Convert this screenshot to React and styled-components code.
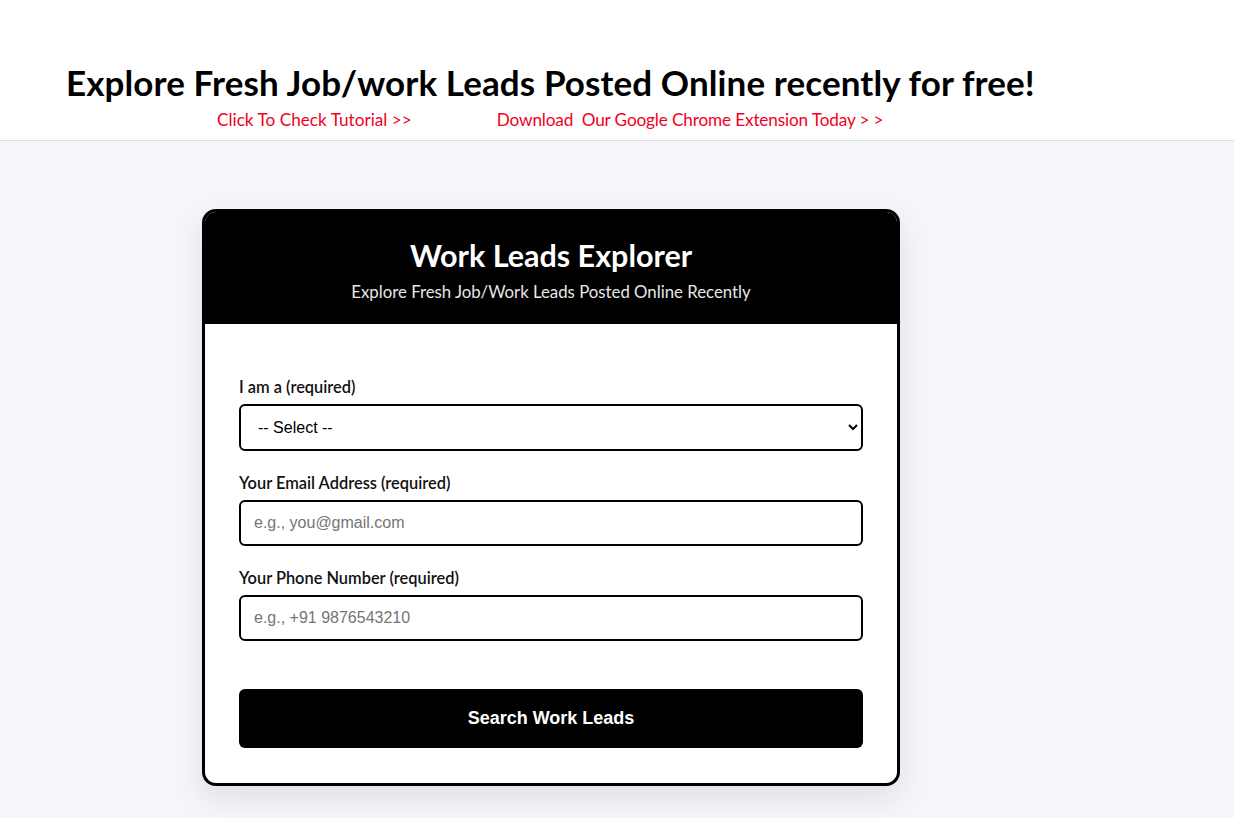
import React from "react";
import styled, { createGlobalStyle } from "styled-components";

const Global = createGlobalStyle`
  html, body { margin: 0; padding: 0; }
  body { background: #f5f6fa; font-family: "Lato", "Noto Sans", sans-serif; }
  * { box-sizing: border-box; }
`;

const Header = styled.header`
  background: #ffffff;
  border-bottom: 1px solid #dedfe3;
  height: 141px;
  padding: 62px 0 0 66px;
`;

const SiteTitle = styled.h1`
  margin: 0;
  font-family: "Lato", sans-serif;
  font-weight: 700;
  font-size: 35px;
  line-height: 40px;
  color: #000;
  letter-spacing: 0.1px;
`;

const LinkRow = styled.div`
  display: flex;
  padding-left: 151px;
  gap: 85px;
  margin-top: 7px;
`;

const RedLink = styled.a`
  font-family: "Lato", sans-serif;
  font-size: 17.2px;
  line-height: 22px;
  color: #f2001e;
  text-decoration: none;
  white-space: pre;
  letter-spacing: ${(p) => p.$tight ? "-0.15px" : "0"};
`;

const Main = styled.main`
  padding: 68px 0 40px 202px;
`;

const Card = styled.section`
  width: 698px;
  border: 3px solid #000;
  border-radius: 14px;
  background: #fff;
  overflow: hidden;
  box-shadow: 0 12px 30px rgba(20, 25, 45, 0.1);
`;

const CardHead = styled.div`
  background: #000;
  color: #fff;
  height: 112px;
  text-align: center;
  padding-top: 25px;
`;

const CardTitle = styled.h2`
  margin: 0;
  font-size: 30.5px;
  line-height: 36px;
  font-weight: 700;
`;

const CardSub = styled.p`
  margin: 0;
  margin-top: 8px;
  font-size: 16.8px;
  line-height: 22px;
  color: #e6e6e6;
`;

const Body = styled.form`
  padding: 53px 34px 35px;
  display: flex;
  flex-direction: column;
`;

const Field = styled.div`
  display: flex;
  flex-direction: column;
  margin-bottom: ${(p) => p.$gap}px;
`;

const Label = styled.label`
  font-size: 16.4px;
  line-height: 20px;
  font-weight: 600;
  color: #111;
  margin-bottom: 7px;
`;

const Select = styled.select`
  height: 47px;
  border: 2px solid #000;
  border-radius: 6px;
  padding: 0 12px 0 13px;
  font-family: "Liberation Sans", Arial, sans-serif;
  font-size: 16px;
  color: #000;
  background: #fff;
`;

const Input = styled.input`
  height: 46px;
  border: 2px solid #000;
  border-radius: 6px;
  padding: 0 13px;
  font-family: "Liberation Sans", Arial, sans-serif;
  font-size: 16px;
  color: #000;
  &::placeholder { color: #757575; }
`;

const Button = styled.button`
  height: 59px;
  border: none;
  border-radius: 6px;
  background: #000;
  color: #fff;
  font-family: "Liberation Sans", Arial, sans-serif;
  font-weight: 700;
  font-size: 18px;
  cursor: pointer;
`;

export default function App() {
  return (
    <>
      <Global />
      <Header>
        <SiteTitle>Explore Fresh Job/work Leads Posted Online recently for free!</SiteTitle>
        <LinkRow>
          <RedLink href="#">Click To Check Tutorial &gt;&gt;</RedLink>
          <RedLink href="#" $tight>{"Download  Our Google Chrome Extension Today > >"}</RedLink>
        </LinkRow>
      </Header>
      <Main>
        <Card>
          <CardHead>
            <CardTitle>Work Leads Explorer</CardTitle>
            <CardSub>Explore Fresh Job/Work Leads Posted Online Recently</CardSub>
          </CardHead>
          <Body onSubmit={(e) => e.preventDefault()}>
            <Field $gap={22}>
              <Label>I am a (required)</Label>
              <Select defaultValue="">
                <option value="">-- Select --</option>
                <option>Freelancer</option>
                <option>Agency</option>
              </Select>
            </Field>
            <Field $gap={22}>
              <Label>Your Email Address (required)</Label>
              <Input type="email" placeholder="e.g., you@gmail.com" />
            </Field>
            <Field $gap={48}>
              <Label>Your Phone Number (required)</Label>
              <Input type="tel" placeholder="e.g., +91 9876543210" />
            </Field>
            <Button type="submit">Search Work Leads</Button>
          </Body>
        </Card>
      </Main>
    </>
  );
}
